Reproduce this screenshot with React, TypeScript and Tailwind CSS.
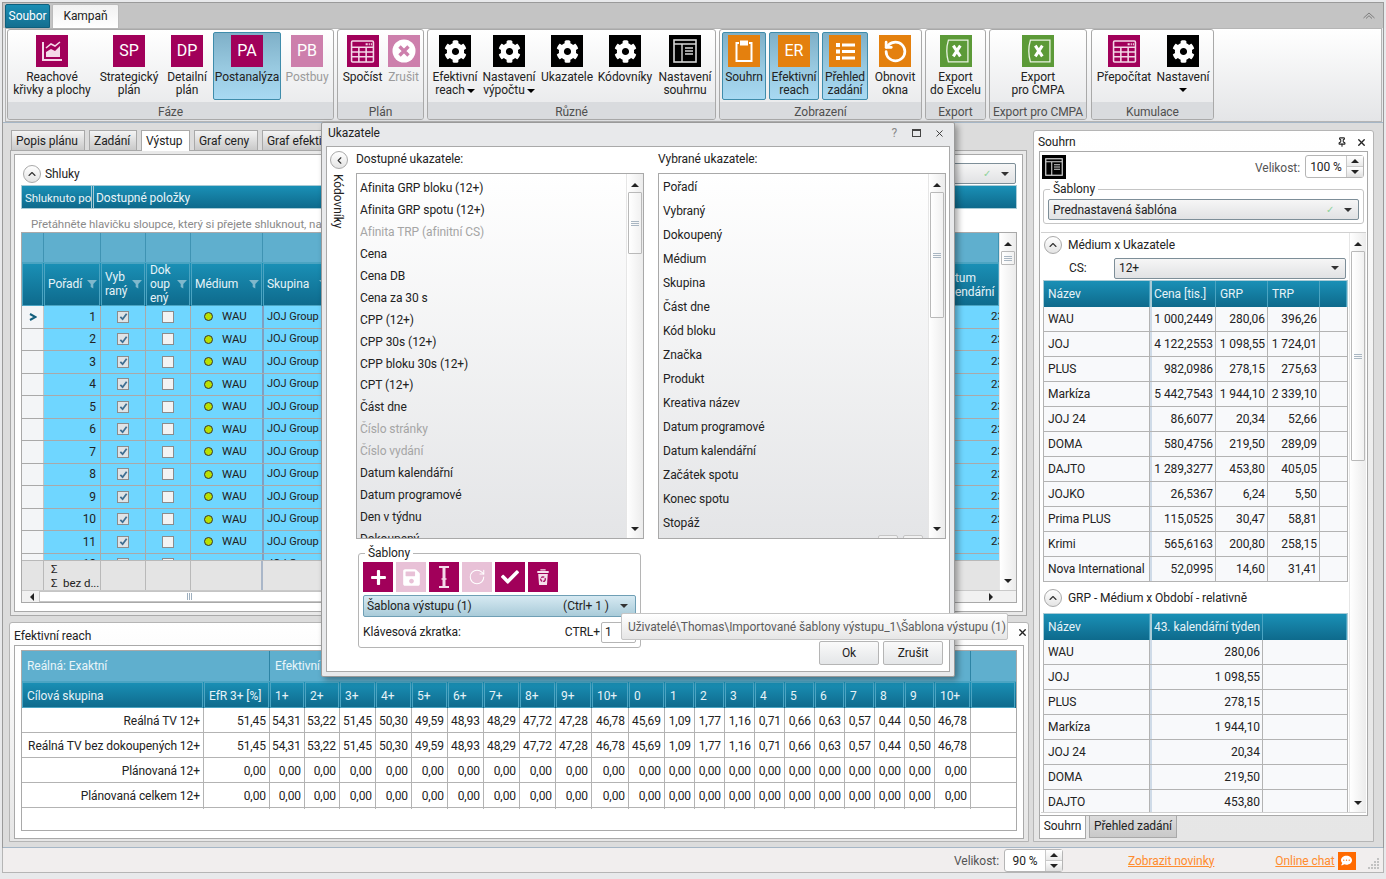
import type { ReactNode } from 'react';
import { FaCog, FaPlus, FaSave, FaCheck, FaCommentDots } from 'react-icons/fa';
import { RotateCcw, RotateCw, Pin, X, ChevronUp, ChevronLeft } from 'lucide-react';

const MAGENTA = 'bg-[#a1005a]';
const MAGENTA_OFF = 'bg-[#cd7fac]';
const BLACK = 'bg-black';
const ORANGE = 'bg-[#e4800e]';
const GREEN = 'bg-[#5c9a38]';
const ACTIVE = 'border border-[#3f8cab] rounded-[2px] bg-gradient-to-b from-[#7fb0c8] via-[#97c8df] to-[#a8d9f2]';
const HEAD = 'bg-gradient-to-b from-[#1a90b6] to-[#0e6a8c]';
const HEAD_LIGHT = 'bg-[#5fafce]';

const Tri = ({ up = false, className = '' }: { up?: boolean; className?: string }) => (
  <svg viewBox="0 0 8 4" className={`w-[8px] h-[4px] shrink-0 ${className}`}>
    <polygon points={up ? '0,4 8,4 4,0' : '0,0 8,0 4,4'} fill="currentColor" />
  </svg>
);

const Gear = () => <FaCog size={23} color="#fff" />;

const ChartIcon = () => (
  <svg viewBox="0 0 24 24" className="w-[24px] h-[24px]" fill="none" stroke="#f5d9e8">
    <path d="M3 3v18h19" strokeWidth="2" />
    <path d="M6 18v-5l5-3 4 2 5-5v11z" fill="#f5d9e8" stroke="none" />
    <path d="M6 9l5-4 4 2 5-4" strokeWidth="1.6" />
  </svg>
);

const CalcIcon = () => (
  <svg viewBox="0 0 24 24" className="w-[25px] h-[25px]" fill="none" stroke="#f3d6e6" strokeWidth="1.5">
    <rect x="1.5" y="2" width="21" height="20" rx="1" />
    <path d="M1.5 8h21M8.5 8v14M15.5 8v14M1.5 12.5h21M1.5 17h21" />
    <path d="M15 5h2M18 5h1M20 5h1" strokeWidth="2" />
  </svg>
);

const XCircleIcon = () => (
  <svg viewBox="0 0 24 24" className="w-[24px] h-[24px]">
    <circle cx="12" cy="12" r="11.5" fill="#fff" />
    <path d="M7.5 7.5l9 9M16.5 7.5l-9 9" stroke="#cd7fac" strokeWidth="3.4" />
  </svg>
);

const LayoutIcon = ({ size = 'w-[24px] h-[24px]' }: { size?: string }) => (
  <svg viewBox="0 0 24 24" className={size} fill="none" stroke="#d6d6d6">
    <rect x="1" y="1" width="22" height="22" strokeWidth="1.6" />
    <path d="M1 5h22M9 5v18" strokeWidth="1.4" />
    <path d="M12 9h8M12 12h8M12 15h8" strokeWidth="1.5" />
  </svg>
);

const ClipboardIcon = () => (
  <svg viewBox="0 0 24 24" className="w-[24px] h-[24px]" fill="none" stroke="#fff" strokeWidth="2">
    <path d="M7 4H4.5v18h15V4H17" />
    <rect x="8" y="1.5" width="8" height="5" fill="#fff" stroke="none" />
  </svg>
);

const ListIcon = () => (
  <svg viewBox="0 0 24 24" className="w-[24px] h-[24px]" fill="#fff">
    <rect x="3" y="4" width="4" height="4" />
    <rect x="9" y="4.5" width="13" height="3" />
    <rect x="3" y="10.5" width="4" height="4" />
    <rect x="9" y="11" width="13" height="3" />
    <rect x="3" y="17" width="4" height="4" />
    <rect x="9" y="17.5" width="13" height="3" />
  </svg>
);

const ExcelIcon = () => (
  <svg viewBox="0 0 24 24" className="w-[26px] h-[26px]" fill="none" stroke="#e8f2e0">
    <path d="M5 2h18v20H5q-3-10 0-20z" strokeWidth="1.2" />
    <path d="M9.5 7l6.5 10M16 7L9.5 17" strokeWidth="2.8" stroke="#fff" />
  </svg>
);

const IBeamIcon = () => (
  <svg viewBox="0 0 16 24" className="w-[16px] h-[24px]" fill="none" stroke="#f4dbe9">
    <path d="M3 2h10M3 22h10" strokeWidth="2" />
    <path d="M8 2v20" strokeWidth="3" />
    <path d="M5.5 14h5" strokeWidth="1.5" />
  </svg>
);

const BinIcon = () => (
  <svg viewBox="0 0 16 20" className="w-[14px] h-[18px]">
    <path d="M5 1h6v1.5H5zM1.5 3h13v2.5h-13z" fill="#f6dfeb" />
    <path d="M2.5 6.5h11L12.5 19h-9z" fill="#f6dfeb" />
    <circle cx="8" cy="12.5" r="2.6" fill="none" stroke="#a1005a" strokeWidth="1.4" strokeDasharray="3.5 1" />
  </svg>
);

const Tile = ({ color, children, label }: { color: string; children?: ReactNode; label?: string }) => (
  <div className={`w-8 h-8 flex items-center justify-center text-white text-[16px] leading-none ${color}`}>
    {label}
    {children}
  </div>
);

const RibbonBtn = ({
  w, color, label, icon, lines, active, off, caret, caretRow,
}: {
  w: string; color: string; label?: string; icon?: ReactNode; lines: string[]; active?: boolean; off?: boolean; caret?: boolean; caretRow?: boolean;
}) => (
  <div className={`${w} h-[68px] mt-[2px] flex flex-col items-center pt-[2px] shrink-0 ${active ? ACTIVE : 'border border-transparent'}`}>
    <Tile color={color} label={label}>{icon}</Tile>
    <div className={`mt-[3px] leading-[13px] text-center whitespace-nowrap pt-[1px] ${off ? 'text-[#9b9b9b]' : 'text-[#222]'}`}>
      {lines.map((l, i) => (
        <div key={l} className="flex items-center justify-center gap-[2px]">
          {l}
          {caret && i === lines.length - 1 && <Tri className="text-black w-[6px] h-[3px]" />}
        </div>
      ))}
      {caretRow && <Tri className="text-black mx-auto mt-[4px] w-[6px] h-[3px]" />}
    </div>
  </div>
);

const RibbonGroup = ({ w, title, children }: { w: string; title: string; children: ReactNode }) => (
  <div className={`${w} h-[91px] shrink-0 flex flex-col border border-[#a9a9a9] rounded-[3px] overflow-hidden bg-gradient-to-b from-white to-[#e6e7e9]`}>
    <div className="flex-1 flex items-start">{children}</div>
    <div className="h-[17px] bg-[#d9dbde] text-center text-[#4f4f4f] leading-[20px]">{title}</div>
  </div>
);

const Ribbon = () => (
  <div>
    <div className="h-[25px] bg-[#c4c4c4] flex items-end pl-[2px] relative">
      <div className="w-[45px] h-[24px] bg-gradient-to-b from-[#1b8eb4] to-[#146f90] border border-[#0d5f7d] rounded-t-[2px] text-white leading-[22px] text-center">Soubor</div>
      <div className="w-[67px] h-[24px] ml-[2px] bg-gradient-to-b from-[#f1f1f1] to-white border border-b-0 border-[#bbb] rounded-t-[2px] leading-[22px] text-center text-[#222]">Kampaň</div>
      <svg viewBox="0 0 12 7" className="absolute right-[8px] top-[9px] w-[12px] h-[7px]" fill="none" stroke="#7d7d7d">
        <path d="M0.5 6L6 1l5.5 5M3 6.5L6 3.7l3 2.8" />
      </svg>
    </div>
    <div className="h-[94px] ml-[2px] mr-[1px] bg-gradient-to-b from-white to-[#e4e5e7] border border-[#b5b5b5] flex gap-[3px] pl-[1px]">
      <RibbonGroup w="w-[327px]" title="Fáze">
        <RibbonBtn w="w-[88px]" color={MAGENTA} icon={<ChartIcon />} lines={['Reachové', 'křivky a plochy']} />
        <RibbonBtn w="w-[66px]" color={MAGENTA} label="SP" lines={['Strategický', 'plán']} />
        <RibbonBtn w="w-[50px]" color={MAGENTA} label="DP" lines={['Detailní', 'plán']} />
        <RibbonBtn w="w-[68px] ml-[1px]" color={MAGENTA} label="PA" lines={['Postanalýza']} active />
        <RibbonBtn w="w-[52px]" color={MAGENTA_OFF} label="PB" lines={['Postbuy']} off />
      </RibbonGroup>
      <RibbonGroup w="w-[87px]" title="Plán">
        <RibbonBtn w="w-[49px]" color={MAGENTA} icon={<CalcIcon />} lines={['Spočíst']} />
        <RibbonBtn w="w-[33px]" color={MAGENTA_OFF} icon={<XCircleIcon />} lines={['Zrušit']} off />
      </RibbonGroup>
      <RibbonGroup w="w-[289px]" title="Různé">
        <RibbonBtn w="w-[54px]" color={BLACK} icon={<Gear />} lines={['Efektivní', 'reach']} caret />
        <RibbonBtn w="w-[54px]" color={BLACK} icon={<Gear />} lines={['Nastavení', 'výpočtu']} caret />
        <RibbonBtn w="w-[62px]" color={BLACK} icon={<Gear />} lines={['Ukazatele']} />
        <RibbonBtn w="w-[54px]" color={BLACK} icon={<Gear />} lines={['Kódovníky']} />
        <RibbonBtn w="w-[62px] ml-[2px]" color={BLACK} icon={<LayoutIcon />} lines={['Nastavení', 'souhrnu']} />
      </RibbonGroup>
      <RibbonGroup w="w-[203px]" title="Zobrazení">
        <RibbonBtn w="w-[44px] ml-[2px]" color={ORANGE} icon={<ClipboardIcon />} lines={['Souhrn']} active />
        <RibbonBtn w="w-[50px] ml-[3px]" color={ORANGE} label="ER" lines={['Efektivní', 'reach']} active />
        <RibbonBtn w="w-[46px] ml-[3px]" color={ORANGE} icon={<ListIcon />} lines={['Přehled', 'zadání']} active />
        <RibbonBtn w="w-[54px]" color={ORANGE} icon={<RotateCcw size={25} color="#fff" strokeWidth={2.6} />} lines={['Obnovit', 'okna']} />
      </RibbonGroup>
      <RibbonGroup w="w-[61px]" title="Export">
        <RibbonBtn w="w-[59px]" color={GREEN} icon={<ExcelIcon />} lines={['Export', 'do Excelu']} />
      </RibbonGroup>
      <RibbonGroup w="w-[98px]" title="Export pro CMPA">
        <RibbonBtn w="w-[96px]" color={GREEN} icon={<ExcelIcon />} lines={['Export', 'pro CMPA']} />
      </RibbonGroup>
      <RibbonGroup w="w-[123px] ml-[1px]" title="Kumulace">
        <RibbonBtn w="w-[64px]" color={MAGENTA} icon={<CalcIcon />} lines={['Přepočítat']} />
        <RibbonBtn w="w-[54px]" color={BLACK} icon={<Gear />} lines={['Nastavení']} caretRow />
      </RibbonGroup>
    </div>
  </div>
);

const Collapse = ({ left = false }: { left?: boolean }) => (
  <div className="w-[18px] h-[18px] rounded-full border border-[#a9a9a9] bg-gradient-to-b from-white to-[#e4e4e4] flex items-center justify-center shrink-0">
    {left ? <ChevronLeft size={11} strokeWidth={2.4} color="#333" /> : <ChevronUp size={12} strokeWidth={2.2} color="#333" />}
  </div>
);

const Funnel = () => (
  <svg viewBox="0 0 10 10" className="w-[10px] h-[10px] shrink-0">
    <path d="M0 1h10L6.3 5v4.5L3.7 8V5z" fill="#7fb8cc" />
  </svg>
);

const Checkbox = ({ checked = false }: { checked?: boolean }) => (
  <div className={`w-[12px] h-[12px] border border-[#8c8c8c] flex items-center justify-center ${checked ? 'bg-[#dfe3e6]' : 'bg-[#f3f3f3]'}`}>
    {checked && (
      <svg viewBox="0 0 10 10" className="w-[9px] h-[9px]" fill="none" stroke="#3f6f92" strokeWidth="2">
        <path d="M1.5 5.5l2.5 2.5 4.5-6" />
      </svg>
    )}
  </div>
);

const VScroll = ({ thumb, grip = true }: { thumb: string; grip?: boolean }) => (
  <div className="w-[17px] shrink-0 h-full flex flex-col items-center bg-gradient-to-r from-white to-[#ececec] border-l border-[#e6e6e6]">
    <Tri up className="text-[#222] mt-[9px] mb-[5px]" />
    <div className={`w-[14px] ${thumb} border border-[#b9b9b9] rounded-[1px] bg-gradient-to-r from-white to-[#f1f1f1] flex flex-col items-center justify-center gap-[1px]`}>
      {grip && (
        <>
          <div className="w-[8px] h-px bg-[#a9b6c2]" />
          <div className="w-[8px] h-px bg-[#a9b6c2]" />
          <div className="w-[8px] h-px bg-[#a9b6c2]" />
        </>
      )}
    </div>
    <Tri className="text-[#222] mt-auto mb-[7px]" />
  </div>
);

const Combo = ({ text, w, check, note }: { text: string; w: string; check?: boolean; note?: string }) => (
  <div className={`${w} h-[21px] flex items-center pl-[4px] pr-[6px] rounded-[2px] border border-[#7d8e98] bg-gradient-to-b from-[#f6f6f6] to-[#e1e2e4] text-[#222]`}>
    <span className="flex-1 truncate">{text}</span>
    {note && <span className="mr-[8px]">{note}</span>}
    {check && <span className="mr-[10px] text-[#8fd39a] text-[10px]">✓</span>}
    <Tri className="text-[#333]" />
  </div>
);

const GRID_COLS = 'grid grid-cols-[22px_57px_45px_45px_72px_70px_606px_60px]';

const HeadCell = ({ children, filter = true }: { children?: ReactNode; filter?: boolean }) => (
  <div className="mr-px border border-[#4ba4c2] flex items-center pl-[3px] pr-[2px] pb-[1px] leading-[14px] text-[#e6f3f8] overflow-hidden">
    <div className="flex-1 whitespace-pre-line">{children}</div>
    {filter && <Funnel />}
  </div>
);

const GridRow = ({ n }: { n: number }) => (
  <div className={`${GRID_COLS} h-[22.5px] border-b border-[#a9a9a9] bg-[#6fd6ff] text-[11.5px] text-[#222]`}>
    <div className="bg-[#f3f5f7] border-r border-[#c5c5c5] flex items-center justify-center text-[#1a6b8a]">
      {n === 1 && (
        <svg viewBox="0 0 8 8" className="w-[8px] h-[8px]" fill="none" stroke="#14607e" strokeWidth="2">
          <path d="M1 1l5.5 3L1 7" />
        </svg>
      )}
    </div>
    <div className="border-r border-[#a9a9a9] flex items-center justify-end pr-[4px] text-[12px]">{n}</div>
    <div className="border-r border-[#a9a9a9] flex items-center justify-center"><Checkbox checked /></div>
    <div className="border-r border-[#a9a9a9] flex items-center justify-center"><Checkbox /></div>
    <div className="border-r border-[#7f9fc0] flex items-center pl-[13px] gap-[9px]">
      <div className="w-[9px] h-[9px] rounded-full bg-[#b9e000] border border-[#333]" />
      WAU
    </div>
    <div className="border-l border-[#7f9fc0] flex items-center pl-[3px] whitespace-nowrap overflow-hidden text-[11px]">JOJ Group</div>
    <div />
    <div className="pl-[52px] flex items-center whitespace-nowrap overflow-hidden">23.10.2018</div>
  </div>
);

const OutputGrid = () => (
  <div className="border border-[#a9a9a9] h-[371px] flex flex-col">
    <div className="flex h-[357px]">
      <div className="flex-1 flex flex-col overflow-hidden">
        <div className={`${GRID_COLS} h-[29px] ${HEAD_LIGHT}`}>
          {[0, 1, 2, 3, 4, 5, 6, 7].map((i) => (
            <div key={i} className="border-r border-[#3f93b3]" />
          ))}
        </div>
        <div className={`${GRID_COLS} h-[44px] ${HEAD} border-t border-[#4ba4c2]`}>
          <HeadCell filter={false} />
          <HeadCell>Pořadí</HeadCell>
          <HeadCell>{'Vyb\nraný'}</HeadCell>
          <HeadCell>{'Dok\noup\nený'}</HeadCell>
          <HeadCell>Médium</HeadCell>
          <HeadCell>Skupina</HeadCell>
          <HeadCell filter={false} />
          <div className="border border-[#4ba4c2] flex items-center pl-[15px] leading-[14px] text-[#e6f3f8] overflow-hidden whitespace-pre-line">{'tum\nendářní'}</div>
        </div>
        <div className="h-[254px] overflow-hidden">
          {[1, 2, 3, 4, 5, 6, 7, 8, 9, 10, 11, 12].map((n) => (
            <GridRow key={n} n={n} />
          ))}
        </div>
        <div className={`${GRID_COLS} h-[30px] bg-[#e4e4e4] border-t border-[#b9b9b9] text-[#222] text-[11.5px]`}>
          <div className="border-r border-[#b9b9b9]" />
          <div className="border-r border-[#b9b9b9] pl-[7px] leading-[14px] pt-[1px] whitespace-nowrap">
            <div>Σ</div>
            <div>Σ&nbsp; bez d...</div>
          </div>
          <div className="border-r border-[#b9b9b9]" />
          <div className="border-r border-[#b9b9b9]" />
          <div className="border-r-2 border-[#a9b6c8]" />
          <div />
          <div />
          <div />
        </div>
      </div>
      <VScroll thumb="h-[14px]" />
    </div>
    <div className="h-[13px] bg-[#f1f1f1] border-t border-[#c9c9c9] flex items-center pl-[8px]">
      <svg viewBox="0 0 4 8" className="w-[4px] h-[8px] text-[#222] shrink-0"><polygon points="4,0 4,8 0,4" fill="currentColor" /></svg>
      <div className="ml-[5px] w-[300px] h-[11px] border border-[#c5c5c5] bg-white flex items-center justify-center gap-px">
        <div className="w-px h-[7px] bg-[#9fb0bf]" />
        <div className="w-px h-[7px] bg-[#9fb0bf]" />
        <div className="w-px h-[7px] bg-[#9fb0bf]" />
      </div>
      <svg viewBox="0 0 4 8" className="w-[4px] h-[8px] text-[#222] shrink-0 ml-auto mr-[23px]"><polygon points="0,0 0,8 4,4" fill="currentColor" /></svg>
    </div>
  </div>
);

const Tab = ({ w, active, children, className = '' }: { w: string; active?: boolean; children: ReactNode; className?: string }) => (
  <div
    className={`${w} h-[20px] leading-[21px] pl-[4px] border border-b-0 border-[#a9a9a9] whitespace-nowrap overflow-hidden ${className} ${
      active ? 'bg-white h-[21px] relative' : 'bg-gradient-to-b from-[#f4f4f4] to-[#c9c9c9]'
    } text-[#222]`}
  >
    {children}
  </div>
);

const UpperPanel = () => (
  <div>
    <div className="h-[20px] flex gap-[4px] pl-[2px]">
      <Tab w="w-[74px]">Popis plánu</Tab>
      <Tab w="w-[48px]">Zadání</Tab>
      <Tab w="w-[49px]" active>Výstup</Tab>
      <Tab w="w-[64px]">Graf ceny</Tab>
      <Tab w="w-[90px]">Graf efektivního</Tab>
    </div>
    <div className="h-[466px] mr-[2px] ml-[1px] border border-[#a9a9a9] bg-[#e9e9e9] p-[3px]">
      <div className="h-full border border-[#a9a9a9] bg-white pl-[6px] pr-[5px] pt-[8px]">
        <div className="h-[21px] flex items-center pl-[2px] pr-[1px]">
          <Collapse />
          <span className="ml-[4px] text-[#222]">Shluky</span>
          <span className="ml-[244px] text-[#222]">Zobrazení</span>
          <div className="ml-auto">
            <Combo text="" w="w-[300px]" check />
          </div>
        </div>
        <div className={`mt-[1px] h-[24px] ${HEAD} flex border border-[#a9cbd6] text-[#e9f5f9]`}>
          <div className="w-[70px] pl-[3px] leading-[24px] whitespace-nowrap border-r border-[#a9cbd6] overflow-hidden text-[11.5px]">Shluknuto po</div>
          <div className="pl-[2px] leading-[24px] ml-[1px] border-l border-[#a9cbd6]">Dostupné položky</div>
        </div>
        <div className="h-[23px] leading-[30px] text-[#8a8a8a] pl-[10px] text-[11.5px] whitespace-nowrap overflow-hidden">
          Přetáhněte hlavičku sloupce, který si přejete shluknout, na toto místo
        </div>
        <OutputGrid />
      </div>
    </div>
  </div>
);

const REACH_COLS = 'grid grid-cols-[182px_66px_35px_35px_36px_36px_36px_36px_36px_36px_36px_37px_36px_30px_30px_30px_30px_30px_30px_30px_30px_30px_36px_1fr]';
const REACH_HEAD = ['Cílová skupina', 'EfR 3+ [%]', '1+', '2+', '3+', '4+', '5+', '6+', '7+', '8+', '9+', '10+', '0', '1', '2', '3', '4', '5', '6', '7', '8', '9', '10+', ''];
const REACH_FULL = ['51,45', '54,31', '53,22', '51,45', '50,30', '49,59', '48,93', '48,29', '47,72', '47,28', '46,78', '45,69', '1,09', '1,77', '1,16', '0,71', '0,66', '0,63', '0,57', '0,44', '0,50', '46,78'];
const REACH_ZERO = REACH_FULL.map(() => '0,00');
const REACH_ROWS = [
  { name: 'Reálná TV 12+', v: REACH_FULL },
  { name: 'Reálná TV bez dokoupených 12+', v: REACH_FULL },
  { name: 'Plánovaná 12+', v: REACH_ZERO },
  { name: 'Plánovaná celkem 12+', v: REACH_ZERO },
];

const ReachPanel = () => (
  <div className="mt-[6px] h-[220px] border border-[#b5b5b5] rounded-t-[3px] bg-gradient-to-b from-white to-[#e6e6e6] flex flex-col">
    <div className="h-[22px] pl-[4px] leading-[26px] text-[#222]">Efektivní reach</div>
    <div className="h-[194px] mx-[4px] border border-[#a9a9a9] bg-white pl-[6px] pr-[6px] pt-[4px]">
      <div className="h-[181px] border border-[#a9a9a9]">
        <div className={`h-[30px] ${HEAD_LIGHT} grid grid-cols-[248px_701px_1fr] text-[#e9f5f9]`}>
          <div className="border-r border-[#2d84a5] pl-[5px] leading-[30px]">Reálná: Exaktní</div>
          <div className="border-r border-[#2d84a5] pl-[5px] leading-[30px]">Efektivní reach</div>
          <div />
        </div>
        <div className={`${REACH_COLS} h-[27px] ${HEAD} border-t border-[#4ba4c2]`}>
          {REACH_HEAD.map((h, i) => (
            <div key={`${h}${i}`} className="mr-px border border-[#4ba4c2] pl-[4px] leading-[26px] text-[#e6f3f8] whitespace-nowrap overflow-hidden">{h}</div>
          ))}
        </div>
        {REACH_ROWS.map((r) => (
          <div key={r.name} className={`${REACH_COLS} h-[25px] border-b border-[#b3b3b3] text-[#222]`}>
            <div className="border-r border-[#b3b3b3] text-right pr-[3px] leading-[26px] whitespace-nowrap">{r.name}</div>
            {r.v.map((c, i) => (
              <div key={i} className="border-r border-[#b3b3b3] text-right pr-[3px] leading-[26px]">{c}</div>
            ))}
            <div />
          </div>
        ))}
      </div>
    </div>
  </div>
);

const Spinner = ({ value, w }: { value: string; w: string }) => (
  <div className={`${w} h-[23px] border border-[#b5b5b5] rounded-[3px] bg-white flex`}>
    <div className="flex-1 text-center leading-[22px] text-[#222]">{value}</div>
    <div className="w-[17px] border-l border-[#c9c9c9] flex flex-col">
      <div className="flex-1 bg-gradient-to-b from-white to-[#e9e9e9] border-b border-[#c9c9c9] flex items-center justify-center"><Tri up className="text-[#222]" /></div>
      <div className="flex-1 bg-gradient-to-b from-white to-[#e0e0e0] flex items-center justify-center"><Tri className="text-[#222]" /></div>
    </div>
  </div>
);

const SUM_COLS = 'grid grid-cols-[106px_66px_52px_52px_1fr]';
const WEEK_COLS = 'grid grid-cols-[106px_113px_1fr]';
const SUM_ROWS = [
  ['WAU', '1 000,2449', '280,06', '396,26'],
  ['JOJ', '4 122,2553', '1 098,55', '1 724,01'],
  ['PLUS', '982,0986', '278,15', '275,63'],
  ['Markíza', '5 442,7543', '1 944,10', '2 339,10'],
  ['JOJ 24', '86,6077', '20,34', '52,66'],
  ['DOMA', '580,4756', '219,50', '289,09'],
  ['DAJTO', '1 289,3277', '453,80', '405,05'],
  ['JOJKO', '26,5367', '6,24', '5,50'],
  ['Prima PLUS', '115,0525', '30,47', '58,81'],
  ['Krimi', '565,6163', '200,80', '258,15'],
  ['Nova International', '52,0995', '14,60', '31,41'],
];
const WEEK_ROWS = [
  ['WAU', '280,06'],
  ['JOJ', '1 098,55'],
  ['PLUS', '278,15'],
  ['Markíza', '1 944,10'],
  ['JOJ 24', '20,34'],
  ['DOMA', '219,50'],
  ['DAJTO', '453,80'],
];

const SumHead = ({ cols, names }: { cols: string; names: string[] }) => (
  <div className={`${cols} h-[27px] ${HEAD} border border-[#a9cbd6] border-b-0`}>
    {names.map((n, i) => (
      <div key={`${n}${i}`} className={`border-r border-[#4ba4c2] leading-[26px] text-[#e6f3f8] whitespace-nowrap overflow-hidden ${i === 1 ? 'border-l-2 border-l-[#a9cbd6] pl-[2px]' : 'pl-[4px]'}`}>{n}</div>
    ))}
  </div>
);

const SumRow = ({ cols, row, extra }: { cols: string; row: string[]; extra?: boolean }) => (
  <div className={`${cols} h-[25px] border-b border-x border-[#b3b3b3] bg-[#f8f9fb] text-[#222]`}>
    {row.map((c, i) => (
      <div
        key={i}
        className={`border-r border-[#b3b3b3] leading-[24px] whitespace-nowrap overflow-hidden ${i === 0 ? 'pl-[4px]' : 'text-right pr-[2px]'} ${i === 1 ? 'border-l-2 border-l-[#cfdbe8]' : ''}`}
      >
        {c}
      </div>
    ))}
    {extra && <div />}
  </div>
);

const SummaryPanel = () => (
  <div className="h-[712px] border border-[#b5b5b5] rounded-t-[3px] bg-gradient-to-b from-white via-[#ececec] to-[#e6e6e6] flex flex-col">
    <div className="h-[20px] pl-[4px] pr-[6px] pt-[2px] flex items-center text-[#222]">
      <span className="flex-1">Souhrn</span>
      <Pin size={10} strokeWidth={2.6} color="#222" className="mr-[9px]" />
      <X size={11} strokeWidth={3} color="#222" />
    </div>
    <div className="h-[665px] mx-[5px] border border-[#a9a9a9] bg-white flex flex-col">
      <div className="h-[30px] shrink-0 flex items-start pl-[2px] pr-[3px] pt-[3px]">
        <div className="w-[24px] h-[24px] bg-black flex items-center justify-center">
          <LayoutIcon size="w-[18px] h-[18px]" />
        </div>
        <span className="ml-auto mt-[4px] text-[#555]">Velikost:</span>
        <div className="ml-[5px]"><Spinner value="100 %" w="w-[59px]" /></div>
      </div>
      <fieldset className="mx-[3px] h-[42px] shrink-0 border border-[#c5c5c5] rounded-[3px] px-[4px]">
        <legend className="ml-[2px] px-[3px] leading-[15px] text-[#222]">Šablony</legend>
        <div className="mt-[2px]"><Combo text="Prednastavená šablóna" w="w-full" check /></div>
      </fieldset>
      <div className="mt-[8px] mb-[2px] flex-1 border-y border-[#d0d0d0] mx-px flex min-h-0 overflow-hidden">
        <div className="flex-1 pl-[2px] pr-px overflow-hidden">
          <div className="h-[24px] flex items-center pl-[1px]">
            <Collapse />
            <span className="ml-[6px] text-[#222]">Médium x Ukazatele</span>
          </div>
          <div className="h-[22px] flex items-center">
            <span className="ml-[26px] w-[45px] text-[#222]">CS:</span>
            <Combo text="12+" w="w-[232px]" />
          </div>
          <div className="mt-[1px]">
            <SumHead cols={SUM_COLS} names={['Název', 'Cena [tis.]', 'GRP', 'TRP', '']} />
            {SUM_ROWS.map((r) => (
              <SumRow key={r[0]} cols={SUM_COLS} row={r} extra />
            ))}
          </div>
          <div className="h-[31px] pt-[1px] flex items-center pl-[1px]">
            <Collapse />
            <span className="ml-[6px] text-[#222]">GRP - Médium x Období - relativně</span>
          </div>
          <SumHead cols={WEEK_COLS} names={['Název', '43. kalendářní týden', '']} />
          {WEEK_ROWS.map((r) => (
            <SumRow key={r[0]} cols={WEEK_COLS} row={r} extra />
          ))}
        </div>
        <VScroll thumb="h-[210px]" />
      </div>
    </div>
    <div className="flex pl-[5px] h-[23px] items-start text-[#222]">
      <div className="w-[47px] h-[23px] bg-white border border-t-0 border-[#a9a9a9] text-center leading-[21px]">Souhrn</div>
      <div className="w-[88px] h-[22px] ml-[3px] bg-gradient-to-b from-[#dcdcdc] to-[#c9c9c9] border border-t-0 border-[#a9a9a9] text-center leading-[20px]">Přehled zadání</div>
    </div>
  </div>
);

const LEFT_ITEMS: [string, boolean?][] = [
  ['Afinita GRP bloku (12+)'], ['Afinita GRP spotu (12+)'], ['Afinita TRP (afinitní CS)', true], ['Cena'], ['Cena DB'],
  ['Cena za 30 s'], ['CPP (12+)'], ['CPP 30s (12+)'], ['CPP bloku 30s (12+)'], ['CPT (12+)'], ['Část dne'],
  ['Číslo stránky', true], ['Číslo vydání', true], ['Datum kalendářní'], ['Datum programové'], ['Den v týdnu'], ['Dokoupený'],
];
const RIGHT_ITEMS = ['Pořadí', 'Vybraný', 'Dokoupený', 'Médium', 'Skupina', 'Část dne', 'Kód bloku', 'Značka', 'Produkt', 'Kreativa název', 'Datum programové', 'Datum kalendářní', 'Začátek spotu', 'Konec spotu', 'Stopáž'];

const DialogBtn = ({ label }: { label: string }) => (
  <div className="w-[60px] h-[24px] border border-[#b5b5b5] rounded-[2px] bg-gradient-to-b from-[#fafafa] to-[#e4e6e8] text-center leading-[22px] text-[#222]">{label}</div>
);

const Dialog = () => (
  <div className="absolute left-[321px] top-[122px] w-[634px] h-[555px] border border-[#9a9a9a] rounded-[2px] bg-[#e8e9eb] shadow-[3px_3px_6px_rgba(0,0,0,0.35)] flex flex-col">
    <div className="h-[23px] flex items-center pl-[6px] pr-[9px] pb-[3px] text-[#222]">
      <span className="flex-1">Ukazatele</span>
      <span className="text-[#8a8a8a] mr-[15px]">?</span>
      <div className="w-[9px] h-[8px] border border-[#444] border-t-2 mr-[13px]" />
      <X size={11} strokeWidth={2} color="#333" />
    </div>
    <div className="h-[526px] mx-[4px] border border-[#a9a9a9] bg-white flex flex-col">
      <div className="flex">
        <div className="w-[29px] shrink-0 flex flex-col items-start pl-[3px] pt-[4px]">
          <Collapse left />
          <div className="mt-[5px] [writing-mode:vertical-rl] text-[#222] leading-[15px]">Kódovníky</div>
        </div>
        <div className="w-[288px] pt-[4px]">
          <div className="h-[22px] leading-[16px] text-[#222]">Dostupné ukazatele:</div>
          <div className="h-[366px] border border-[#a9a9a9] bg-gradient-to-b from-white to-[#e4e5e7] flex overflow-hidden">
            <div className="flex-1 pl-[3px] pt-[3px] overflow-hidden">
              {LEFT_ITEMS.map(([t, off]) => (
                <div key={t} className={`h-[21.95px] leading-[22px] ${off ? 'text-[#a5a5a5]' : 'text-[#222]'}`}>{t}</div>
              ))}
            </div>
            <VScroll thumb="h-[62px]" />
          </div>
        </div>
        <div className="w-[288px] ml-[14px] pt-[4px]">
          <div className="h-[22px] leading-[16px] text-[#222]">Vybrané ukazatele:</div>
          <div className="h-[366px] border border-[#a9a9a9] bg-gradient-to-b from-white to-[#e4e5e7] flex overflow-hidden relative">
            <div className="flex-1 pl-[4px] pt-px overflow-hidden">
              {RIGHT_ITEMS.map((t) => (
                <div key={t} className="h-[24px] leading-[24px] text-[#222]">{t}</div>
              ))}
            </div>
            <VScroll thumb="h-[126px]" />
            <div className="absolute left-[219px] top-[361px] w-[20px] h-[8px] border border-[#c5c5c5] rounded-[2px] bg-[#f2f2f2]" />
            <div className="absolute left-[244px] top-[361px] w-[20px] h-[8px] border border-[#c5c5c5] rounded-[2px] bg-[#f2f2f2]" />
          </div>
        </div>
      </div>
      <div className="flex-1 flex">
        <fieldset className="ml-[31px] mt-[7px] w-[283px] h-[102px] border border-[#b5b5b5] rounded-[3px] px-[4px]">
          <legend className="ml-[2px] px-[3px] leading-[15px] text-[#222]">Šablony</legend>
          <div className="flex gap-[3px] mt-[1px]">
            <div className={`w-[30px] h-[30px] ${MAGENTA} flex items-center justify-center`}><FaPlus size={17} color="#fff" /></div>
            <div className="w-[30px] h-[30px] bg-[#e8c1d7] flex items-center justify-center"><FaSave size={19} color="#fff" /></div>
            <div className={`w-[30px] h-[30px] ${MAGENTA} flex items-center justify-center`}><IBeamIcon /></div>
            <div className="w-[30px] h-[30px] bg-[#e8c1d7] flex items-center justify-center"><RotateCw size={18} color="#fff" strokeWidth={1.4} /></div>
            <div className={`w-[30px] h-[30px] ${MAGENTA} flex items-center justify-center`}><FaCheck size={18} color="#fff" /></div>
            <div className={`w-[30px] h-[30px] ${MAGENTA} flex items-center justify-center`}><BinIcon /></div>
          </div>
          <div className="mt-[3px] h-[22px] flex items-center pl-[3px] pr-[7px] rounded-[2px] border border-[#6f9fb5] bg-gradient-to-b from-[#d6e9f2] to-[#a9cbd9] text-[#222]">
            <span className="flex-1">Šablona výstupu (1)</span>
            <span className="mr-[11px]">(Ctrl+ 1 )</span>
            <Tri className="text-[#333]" />
          </div>
          <div className="mt-[5px] h-[20px] flex items-center text-[#222]">
            <span className="flex-1">Klávesová zkratka:</span>
            <span>CTRL+</span>
            <div className="w-[35px] h-[21px] border border-[#b5b5b5] rounded-[2px] ml-px pl-[3px] leading-[19px]">1</div>
          </div>
        </fieldset>
        <div className="ml-auto mr-[6px] mt-auto mb-[6px] flex gap-[4px]">
          <DialogBtn label="Ok" />
          <DialogBtn label="Zrušit" />
        </div>
      </div>
    </div>
  </div>
);

const Grip = () => (
  <svg viewBox="0 0 12 12" className="w-[12px] h-[12px] self-end mb-[2px]" fill="#c2c2c2">
    <rect x="9" y="0" width="2" height="2" />
    <rect x="6" y="3" width="2" height="2" />
    <rect x="9" y="3" width="2" height="2" />
    <rect x="3" y="6" width="2" height="2" />
    <rect x="6" y="6" width="2" height="2" />
    <rect x="9" y="6" width="2" height="2" />
    <rect x="0" y="9" width="2" height="2" />
    <rect x="3" y="9" width="2" height="2" />
    <rect x="6" y="9" width="2" height="2" />
    <rect x="9" y="9" width="2" height="2" />
  </svg>
);

export default function App() {
  return (
    <div className="relative w-[1386px] h-[879px] overflow-hidden bg-[#e8e9eb] font-['Roboto',sans-serif] text-[12px] tracking-[-0.06px] pt-[2px] pl-[2px] pr-[2px]">
      <div className="h-[846px] border border-b-0 border-[#9a9a9a] flex flex-col">
        <Ribbon />
        <div className="flex-1 bg-[#dcdcdc] border-y border-[#a5b6c6] flex pl-[6px] pt-[7px] gap-[4px]">
          <div className="w-[1020px] shrink-0">
            <UpperPanel />
            <ReachPanel />
          </div>
          <div className="w-[341px] shrink-0">
            <SummaryPanel />
          </div>
        </div>
      </div>
      <div className="h-[25px] pt-[1px] border border-t-0 border-[#b5b5b5] bg-[#f1eeee] flex items-center text-[#555]">
        <span className="ml-[951px]">Velikost:</span>
        <div className="ml-[5px]"><Spinner value="90 %" w="w-[59px]" /></div>
        <span className="ml-[65px] text-[#ff8c2e] underline">Zobrazit novinky</span>
        <span className="ml-[61px] text-[#ff8c2e] underline">Online chat</span>
        <div className="ml-[3px] w-[18px] h-[18px] bg-[#ff6a00] flex items-center justify-center">
          <FaCommentDots size={11} color="#fff" />
        </div>
        <div className="ml-auto mr-[3px] self-stretch flex"><Grip /></div>
      </div>
      <Dialog />
      <div className="absolute left-[621px] top-[613px] w-[387px] h-[27px] border border-[#c5c5c5] rounded-[2px] bg-gradient-to-b from-white to-[#e6e6e6] pl-[6px] leading-[26px] text-[#5c5c5c] whitespace-nowrap">
        Uživatelé\Thomas\Importované šablony výstupu_1\Šablona výstupu (1)
      </div>
      <div className="absolute left-[1017px] top-[627px] text-[#222]"><X size={11} strokeWidth={3} /></div>
    </div>
  );
}
